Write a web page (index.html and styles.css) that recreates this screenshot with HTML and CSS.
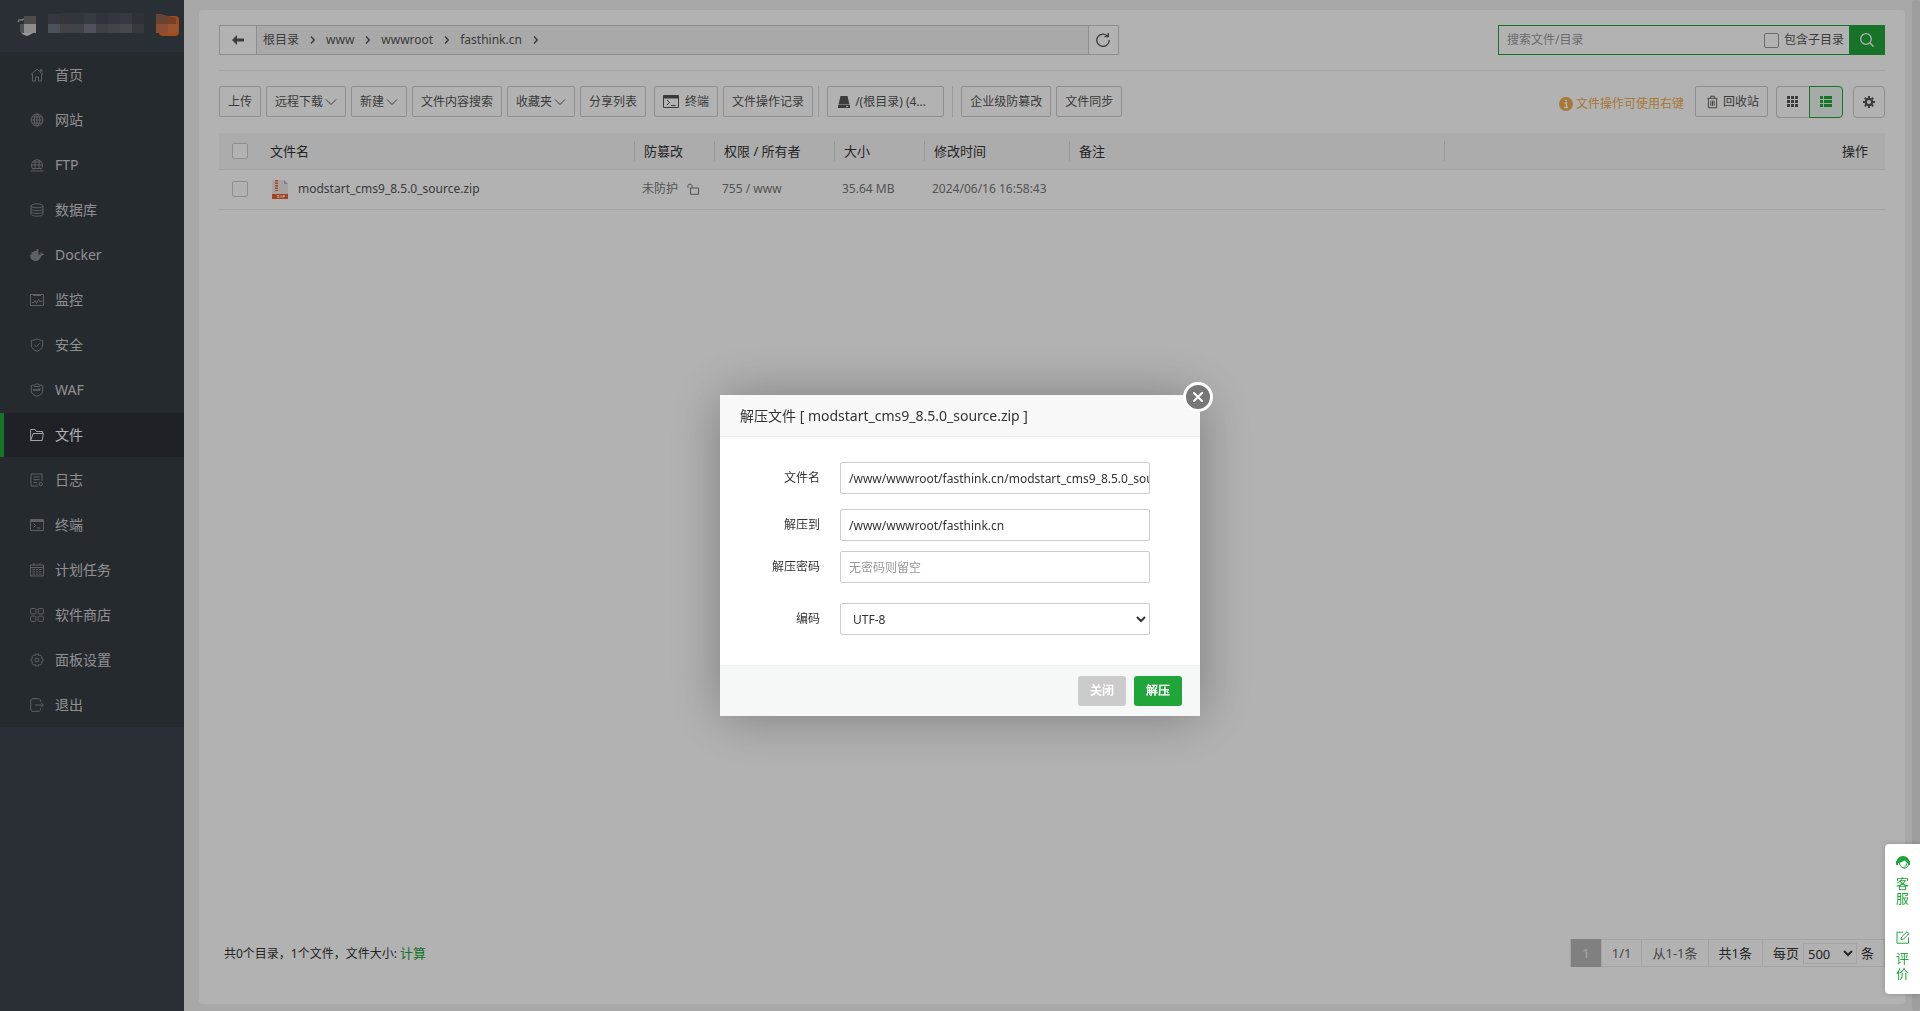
FILE: index.html
```html
<!DOCTYPE html>
<html lang="zh-CN">
<head>
<meta charset="utf-8">
<title>文件</title>
<link rel="stylesheet" href="styles.css">
</head>
<body>
<div class="app">
  <aside class="sidebar">
    <div class="brand">
      <svg class="brand-art" width="184" height="52" viewBox="0 0 184 52" aria-hidden="true">
        <path d="M18 22l1-2h3l2-1M21 24v6c0 2 1 3 2 4" fill="none" stroke="#a8abae" stroke-width="1.500"/>
        <path d="M24 16h12v8H24z" fill="#6a6d70"/><path d="M24 24h12v9H24z" fill="#c8cacc"/><path d="M20 24h4v9h-2c-1-1-2-3-2-5z" fill="#6f7275"/><path d="M22 33h11c-2 1-3 2-6 3-2-1-4-1-5-3z" fill="#d8dadb"/>
        <g>
          <path fill="#4b505b" d="M48 14h12v10H48z"/><path fill="#484d57" d="M60 13h12v11H60z"/><path fill="#474c56" d="M72 13h12v11H72z"/><path fill="#4e535e" d="M84 13h12v11H84z"/><path fill="#464a54" d="M96 13h12v11H96z"/><path fill="#4a4e57" d="M108 13h12v11h-12z"/><path fill="#4e525d" d="M120 13h12v11h-12z"/><path fill="#434851" d="M132 13h12v11h-12z"/>
          <path fill="#6a7480" d="M48 24h12v9H48z"/><path fill="#5e6166" d="M60 24h12v9H60z"/><path fill="#5c6067" d="M72 24h12v9H72z"/><path fill="#727686" d="M84 24h12v9H84z"/><path fill="#585c62" d="M96 24h12v9H96z"/><path fill="#5d6269" d="M108 24h12v9h-12z"/><path fill="#636970" d="M120 24h12v9h-12z"/><path fill="#4e5357" d="M132 24h12v9h-12z"/>
        </g>
        <rect x="159" y="16" width="20" height="20" rx="4" fill="#ea6a2a"/>
        <path d="M156 14h5l7 2v8h-12z" fill="#93604a"/><path d="M156 24h12v9h-12z" fill="#c5704a"/><path d="M168 16l8 2v6h-8z" fill="#a85c38"/><path d="M168 24h10v9h-10z" fill="#df7740"/>
      </svg>
    </div>
    <ul class="menu">
      <li><a href="#"><svg viewBox="0 0 14 14"><path d="M1 6.500L7 1l6 5.500M2.500 6v7h3V9h3v4h3V6M10.500 3.500V1.500h1.500v3"/></svg>首页</a></li>
      <li><a href="#"><svg viewBox="0 0 14 14"><circle cx="7" cy="7" r="6"/><ellipse cx="7" cy="7" rx="2.800" ry="6"/><path d="M7 1v12M1 7h12M2 4h10M2 10h10"/></svg>网站</a></li>
      <li><a href="#"><svg viewBox="0 0 14 14"><path d="M3.500 11.500a5.500 5.500 0 1 1 7 0M1.500 7h11M2.500 4h9M2.500 10.500h9M5 10.500V2M9 10.500V2M.5 13h13"/></svg>FTP</a></li>
      <li><a href="#"><svg viewBox="0 0 14 14"><ellipse cx="7" cy="2.800" rx="6" ry="2"/><path d="M1 3v8.200c0 1 2.500 2 6 2s6-1 6-2V3M1 5.700c0 1 2.500 2 6 2s6-1 6-2M1 8.500c0 1 2.500 2 6 2s6-1 6-2"/></svg>数据库</a></li>
      <li><a href="#"><svg viewBox="0 0 14 14"><path class="solid" d="M0 6.500h1.500V4H4V3h2.500V1h2v5.500h2c0-1-.2-1.500.5-2.500.7.500 1 1 1 1.700.8 0 1.500 0 2 .5-.5 1-1.300 1.300-2.500 1.300C10.500 11 8.500 13 5.500 13 2 13 0 10.500 0 6.500z"/></svg>Docker</a></li>
      <li><a href="#"><svg viewBox="0 0 14 14"><path d="M.5 1.500h13v11H.5zM3 2.500h8M2 9.500h2l1-2 1.500 3 2-4L10 9l1-1h1.500"/></svg>监控</a></li>
      <li><a href="#"><svg viewBox="0 0 14 14"><path d="M7 .7C5.500 1.800 3.500 2.300 1.300 2.500V7c0 3 2.500 5 5.700 6.300C10.200 12 12.700 10 12.700 7V2.500C10.500 2.300 8.500 1.800 7 .7zM4.200 6.800l2.100 2 3.500-3.500"/></svg>安全</a></li>
      <li><a href="#"><svg viewBox="0 0 14 14"><path d="M7 .7C5.500 1.800 3.500 2.300 1.300 2.500V8c0 3 2.500 4 5.700 5.300C10.200 12 12.700 11 12.700 8V2.500C10.500 2.300 8.500 1.800 7 .7zM4 3.500h6M3 6l.8 2L5 6l1 2 1-2 1 2V6h1.500v2M9.500 6H11"/></svg>WAF</a></li>
      <li class="active"><a href="#"><svg viewBox="0 0 14 14"><path d="M.6 12.500V1.500h4.500l1.400 2h6v2M.6 12.500h11.600L13.400 5.500H3.200L.6 12.500"/></svg>文件</a></li>
      <li><a href="#"><svg viewBox="0 0 14 14"><path d="M8 13H1V1h11v7M3.500 4h6M3.500 6.700h6M3.500 9.500h3.500"/><circle cx="10.800" cy="11" r="1.700"/></svg>日志</a></li>
      <li><a href="#"><svg viewBox="0 0 14 14"><path d="M.5 1.500h13v11H.5zM1 2.500h12M1 3.500h12M3.500 5.500l2 2-2 2M7 10h3.500"/></svg>终端</a></li>
      <li><a href="#"><svg viewBox="0 0 14 14"><path d="M.5 2h13v11H.5zM4 0v2M10 0v2M1 4.500h12M2.500 6.500h2.500M6 6.500h2M9 6.500h2.500M2.500 8.700h2.500M6 8.700h2M9 8.700h2.500M2.500 11h2.500M6 11h2M9 11h2.500"/></svg>计划任务</a></li>
      <li><a href="#"><svg viewBox="0 0 14 14"><rect x=".6" y=".6" width="5.300" height="5.300" rx="1"/><rect x="8.100" y=".6" width="5.300" height="5.300" rx="1"/><rect x=".6" y="8.100" width="5.300" height="5.300" rx="1"/><rect x="8.100" y="8.100" width="5.300" height="5.300" rx="1"/></svg>软件商店</a></li>
      <li><a href="#"><svg viewBox="0 0 14 14"><circle cx="7" cy="7" r="2"/><path d="M5.700 1h2.600l.5 1.500 1.700-.4 1.500 1.700-.6 1.500L13 6v2l-1.600.8.600 1.500-1.500 1.700-1.700-.5L8.300 13H5.700l-.5-1.500-1.700.5L2 10.300l.6-1.500L1 8V6l1.600-.7L2 3.800l1.500-1.700 1.700.4z"/></svg>面板设置</a></li>
      <li><a href="#"><svg viewBox="0 0 14 14"><path d="M10.500 3.500V2l-1.300-1.300H2L.7 2v10L2 13.300h7.200l1.300-1.300v-1.500M5 7h8.300M11 4.500L13.300 7 11 9.500"/></svg>退出</a></li>
    </ul>
  </aside>

  <main class="main">
    <section class="panel">
      <div class="path-row">
        <div class="path">
          <button class="path-btn back" type="button" aria-label="返回"><svg width="12" height="10" viewBox="0 0 12 10"><path d="M0 5l5-5v3.500h7v3H5V10z" fill="currentColor"/></svg></button>
          <nav class="crumbs">
            <a href="#">根目录</a><svg class="chev" viewBox="0 0 5 8"><path d="M1 .5L4.300 4 1 7.500"/></svg>
            <a href="#">www</a><svg class="chev" viewBox="0 0 5 8"><path d="M1 .5L4.300 4 1 7.500"/></svg>
            <a href="#">wwwroot</a><svg class="chev" viewBox="0 0 5 8"><path d="M1 .5L4.300 4 1 7.500"/></svg>
            <a href="#">fasthink.cn</a><svg class="chev" viewBox="0 0 5 8"><path d="M1 .5L4.300 4 1 7.500"/></svg>
          </nav>
          <button class="path-btn reload" type="button" aria-label="刷新"><svg class="line" width="14" height="14" viewBox="0 0 14 14"><path d="M11.800 3.300A6.200 6.200 0 1 0 13.200 7M12.300 0v3.700H8.600" stroke-width="1.300"/></svg></button>
        </div>
        <form class="search">
          <input class="search-text" type="text" placeholder="搜索文件/目录" aria-label="搜索文件/目录">
          <label class="search-sub"><input class="check" type="checkbox">包含子目录</label>
          <button class="search-btn" type="button" aria-label="搜索"><svg class="line" width="14" height="14" viewBox="0 0 14 14"><circle cx="6" cy="6" r="5.300" stroke-width="1.300"/><path d="M10 10l3.600 3.600" stroke-width="1.500"/></svg></button>
        </form>
      </div>

      <div class="toolbar">
        <button class="btn" type="button">上传</button>
        <button class="btn" type="button">远程下载<svg class="caret" viewBox="0 0 12 12"><path d="M1 3.500L6 8.500l5-5"/></svg></button>
        <button class="btn" type="button">新建<svg class="caret" viewBox="0 0 12 12"><path d="M1 3.500L6 8.500l5-5"/></svg></button>
        <button class="btn" type="button">文件内容搜索</button>
        <button class="btn" type="button">收藏夹<svg class="caret" viewBox="0 0 12 12"><path d="M1 3.500L6 8.500l5-5"/></svg></button>
        <button class="btn" type="button">分享列表</button>
        <button class="btn group-start" type="button"><svg class="line term" width="16" height="13" viewBox="0 0 16 13"><path d="M.5.500h15v12H.5z"/><path d="M4 5l2.500 2.500L4 10M8 10.500h4.500"/><path d="M1 1h14v2H1z" fill="currentColor"/></svg>终端</button>
        <button class="btn" type="button">文件操作记录</button>
        <span class="sep"></span>
        <button class="btn disk" type="button"><svg width="12" height="12" viewBox="0 0 12 12"><path d="M2.500 0h7L11.500 8.500H.5zM0 9h12v3H0z" fill="currentColor"/><path d="M8 10.500h2" stroke="#fff"/></svg>/(根目录) (4...</button>
        <span class="sep wide"></span>
        <button class="btn" type="button">企业级防篡改</button>
        <button class="btn" type="button">文件同步</button>
        <div class="tools">
          <span class="hint"><svg width="14" height="14" viewBox="0 0 14 14"><circle cx="7" cy="7" r="7" fill="currentColor"/><path d="M5.500 6h2v4M5 10.500h4M6 3.500h2" stroke="#fff" stroke-width="1.500" fill="none"/></svg>文件操作可使用右键</span>
          <button class="btn recycle" type="button"><svg class="line" width="12" height="14" viewBox="0 0 12 14"><path d="M.5 3h11M4 3V.7h4V3M1.500 3.500v9.800h9V3.500M4.200 5.500v5.700M6 5.500v5.700M7.800 5.500v5.700"/></svg>回收站</button>
          <div class="views">
            <button class="view" type="button" aria-label="图标"><svg width="12" height="12" viewBox="0 0 12 12"><path fill="currentColor" d="M0 0h3v3H0zM4 0h3v3H4zM8 0h3v3H8zM0 4h3v3H0zM4 4h3v3H4zM8 4h3v3H8zM0 8h3v3H0zM4 8h3v3H4zM8 8h3v3H8z"/></svg></button>
            <button class="view on" type="button" aria-label="列表"><svg width="12" height="12" viewBox="0 0 12 12"><path fill="currentColor" d="M0 0h3v3H0zM4 0h8v3H4zM0 4h3v3H0zM4 4h8v3H4zM0 8h3v3H0zM4 8h8v3H4z"/></svg></button>
          </div>
          <button class="gear" type="button" aria-label="设置"><svg width="12" height="12" viewBox="0 0 12 12"><circle cx="6" cy="6" r="3.200" fill="none" stroke="currentColor" stroke-width="2.200"/><path d="M6 0v2M6 10v2M0 6h2M10 6h2M1.800 1.800l1.400 1.400M8.800 8.800l1.400 1.400M1.800 10.200l1.400-1.400M8.800 3.200l1.400-1.400" stroke="currentColor" stroke-width="2"/></svg></button>
        </div>
      </div>

      <table class="files">
        <colgroup><col class="c-check"><col><col class="c-guard"><col class="c-perm"><col class="c-size"><col class="c-time"><col class="c-note"><col class="c-ops"></colgroup>
        <thead>
          <tr><th class="first"><input class="check" type="checkbox" aria-label="全选"></th><th class="plain">文件名</th><th>防篡改</th><th>权限 / 所有者</th><th>大小</th><th>修改时间</th><th>备注</th><th class="ops">操作</th></tr>
        </thead>
        <tbody>
          <tr>
            <td class="first"><input class="check" type="checkbox" aria-label="选择 modstart_cms9_8.5.0_source.zip"></td>
            <td><a class="file" href="#"><svg width="16" height="19" viewBox="0 0 16 19"><path d="M0 0h12l4 4v10H0z" fill="#f0e9e6"/><path d="M12 0v4h4z" fill="#bbb"/><path d="M4.500 0v11" stroke="#e8663c" stroke-width="3" stroke-dasharray="1.500 1"/><path d="M0 14h16v5H0z" fill="#ea6030"/><path d="M5 15.500h2l-1.500 2h2M9 15v3M11 18v-2.500h1.500v1H11" stroke="#fff" fill="none" stroke-width=".8"/></svg>modstart_cms9_8.5.0_source.zip</a></td>
            <td><span class="guard">未防护<svg class="line" width="12" height="12" viewBox="0 0 12 12"><path d="M3.500 5h8v6.300h-8zM5 5V2.500C5 .8 1 .8 1 2.500V5"/></svg></span></td>
            <td>755 / www</td><td>35.64 MB</td><td>2024/06/16 16:58:43</td><td></td><td></td>
          </tr>
        </tbody>
      </table>

      <footer class="foot">
        <p class="summary">共0个目录，1个文件，文件大小: <a href="#">计算</a></p>
        <div class="pager">
          <span class="page current">1</span><span class="page soft">1/1</span><span class="page soft">从1-1条</span><span class="page">共1条</span>
          <label class="page per">每页<select><option>500</option></select>条</label>
        </div>
      </footer>
    </section>
  </main>
  <div class="scroll"></div>
</div>

<div class="overlay">
  <div class="dialog" role="dialog" aria-labelledby="dlg-title">
    <h2 class="dialog-title" id="dlg-title">解压文件 [ modstart_cms9_8.5.0_source.zip ]</h2>
    <button class="dialog-x" type="button" aria-label="关闭"><svg width="10" height="10" viewBox="0 0 10 10"><path d="M0 0l10 10M10 0L0 10" stroke="#fff" stroke-width="2"/></svg></button>
    <form class="form">
      <div class="row"><label for="f-name">文件名</label><input id="f-name" type="text" value="/www/wwwroot/fasthink.cn/modstart_cms9_8.5.0_source.zip"></div>
      <div class="row"><label for="f-dest">解压到</label><input id="f-dest" type="text" value="/www/wwwroot/fasthink.cn"></div>
      <div class="row tight"><label for="f-pass">解压密码</label><input id="f-pass" type="text" placeholder="无密码则留空"></div>
      <div class="row loose"><label for="f-code">编码</label><select id="f-code"><option>UTF-8</option></select></div>
    </form>
    <div class="dialog-foot"><button class="act" type="button">关闭</button><button class="act go" type="button">解压</button></div>
  </div>
</div>

<div class="service">
  <a href="#"><svg width="14" height="13" viewBox="0 0 14 13"><path d="M1 7C0 3 3 0 7 0s7 3 6 7H11L9 4.500 3.500 7z" fill="currentColor"/><path d="M0 5h2v4H0zM12 5h2v4h-2z" fill="currentColor"/><path d="M3.500 7c.3 3 2 4.500 3.500 4.500S10.700 10 11 7M12.500 8c0 2.500-2 4-5 4.300" fill="none" stroke="currentColor"/></svg><span>客服</span></a>
  <a href="#"><svg class="line" width="14" height="13" viewBox="0 0 14 13"><path d="M7 1.200H1v11h11.500V6.500M5 8.500l.5-2.500L11 .700l2 2L7.500 8z"/></svg><span>评价</span></a>
</div>
</body>
</html>
```
FILE: styles.css
```css
* { box-sizing: border-box; }
body, ul, h2, p { margin: 0; padding: 0; }
body, button, input, select {
  font-family: "Noto Sans", "Noto Sans CJK SC", sans-serif;
  font-size: 12px;
  line-height: 16px;
  color: #555;
}
a { color: inherit; text-decoration: none; }
button { padding: 0; }
.line { fill: none; stroke: currentColor; stroke-width: 1; }

.app { display: flex; min-height: 100vh; background: #f1f1f1; }

/* Sidebar */
.sidebar { width: 184px; flex: none; background: #3c444d; }
.brand { height: 52px; }
.brand-art { display: block; }
.menu { list-style: none; background: #353d44; }
.menu li { padding-top: 1px; }
.menu a {
  display: flex;
  align-items: center;
  gap: 11px;
  height: 44px;
  padding-left: 26px;
  border-left: 4px solid transparent;
  font-size: 14px;
  color: #cfcfcf;
}
.menu svg { width: 14px; height: 14px; fill: none; stroke: #868b8f; stroke-width: 1; }
.menu .solid { fill: #868b8f; stroke: none; }
.menu .active a { background: #2c3138; border-left-color: #20a53a; color: #fff; }
.menu .active svg { stroke: #e8e8e8; }

/* Main panel */
.main { flex: 1; display: flex; padding: 10px 7px 7px 15px; }
.scroll { width: 8px; flex: none; border-radius: 4px; background: #e2e2e2; }
.panel { flex: 1; display: flex; flex-direction: column; padding: 15px 20px 37px; border-radius: 4px; background: #fff; }

.path-row { display: flex; justify-content: space-between; padding-bottom: 15px; border-bottom: 1px solid #eee; }
.path { display: flex; width: 54%; height: 30px; border: 1px solid #ccc; background: #f3f3f3; }
.path-btn { display: flex; align-items: center; justify-content: center; border: 0 solid #ccc; background: #fff; }
.back { width: 37px; border-right-width: 1px; }
.reload { width: 30px; border-left-width: 1px; }
.crumbs { flex: 1; display: flex; align-items: center; gap: 11px; padding-left: 6px; }
.chev { width: 5px; height: 8px; fill: none; stroke: #555; stroke-width: 1.500; }

.search { display: flex; width: 387px; height: 30px; border: 1px solid #20a53a; }
.search-text { flex: 1; min-width: 0; padding: 0 8px; border: 0; background: none; }
.search-sub { display: flex; align-items: center; gap: 5px; padding-right: 6px; }
.search-btn { width: 36px; margin: -1px; border: 0; background: #20a53a; color: #fff; display: flex; align-items: center; justify-content: center; }
::placeholder { color: #999; }

.check { appearance: none; width: 15px; height: 15px; margin: 0; border: 1px solid #999; border-radius: 2px; background: #fff; }

.toolbar { display: flex; align-items: flex-start; gap: 5px; padding: 15px 0 12px; }
.btn {
  display: flex;
  align-items: center;
  height: 31px;
  padding: 0 8px;
  border: 1px solid #ccc;
  border-radius: 2px;
  background: #fff;
  white-space: nowrap;
}
.caret { width: 12px; height: 12px; margin-left: 2px; fill: none; stroke: #555; }
.group-start { margin-left: 3px; }
.term { margin-right: 6px; }
.sep { width: 1px; height: 31px; margin-right: 3px; background: #ddd; }
.sep.wide { margin-left: 3px; }
.disk { width: 117px; gap: 5px; padding-left: 10px; }
.tools { display: flex; align-items: flex-start; margin-left: auto; }
.hint { display: flex; align-items: center; gap: 3px; height: 35px; margin-right: 11px; color: #f0ad4e; }
.recycle { gap: 5px; width: 73px; padding-left: 11px; margin-right: 8px; }
.views { display: flex; margin-right: 10px; }
.view, .gear { display: flex; align-items: center; justify-content: center; height: 32px; border: 1px solid #ccc; background: #fff; }
.view { width: 33px; border-right: 0; border-radius: 4px 0 0 4px; }
.view.on { width: 34px; border: 1px solid #20a53a; border-radius: 0 4px 4px 0; background: #edf7ef; color: #20a53a; }
.gear { width: 32px; border-radius: 4px; }

/* File table */
.files { width: 100%; table-layout: fixed; border-collapse: collapse; }
.c-check { width: 41px; }
.c-guard { width: 80px; }
.c-perm { width: 120px; }
.c-size { width: 90px; }
.c-time { width: 145px; }
.c-note { width: 375px; }
.c-ops { width: 441px; }
.files th {
  height: 36px;
  padding: 0 10px;
  border-bottom: 1px solid #eaeaea;
  background: linear-gradient(#ddd, #ddd) no-repeat left center / 1px 20px #f6f6f6;
  font-size: 13px;
  font-weight: 400;
  text-align: left;
  color: #333;
}
.files .first, .files .plain { background-image: none; }
.files .first { padding: 0 0 0 13px; }
.files .check { display: block; width: 16px; height: 16px; border-color: #ccc; }
.files .ops { padding-right: 17px; text-align: right; }
.files td { height: 40px; padding: 0 8px; border-bottom: 1px solid #eaeaea; color: #777; }
.file { display: flex; align-items: center; gap: 10px; padding-left: 4px; color: #555; }
.guard { display: flex; align-items: center; gap: 9px; }

/* Footer */
.foot { display: flex; align-items: center; justify-content: space-between; margin-top: auto; padding-left: 5px; }
.summary { color: #333; }
.summary a { font-size: 13px; color: #20a53a; }
.pager { display: flex; height: 28px; border: 1px solid #eaeaea; font-size: 13px; color: #333; }
.page { display: flex; align-items: center; padding: 0 10px; border-left: 1px solid #eaeaea; }
.page.soft { color: #666; }
.page.current { margin: -1px 0; padding: 0 11px; border: 0; background: #b8b8b8; color: #eee; }
.per { gap: 4px; }
.per select { width: 54px; height: 21px; padding: 0; border: 1px solid #eaeaea; background: #fff; font-size: 13px; color: #333; }

/* Dialog */
.overlay {
  position: fixed;
  inset: 0;
  display: flex;
  align-items: center;
  justify-content: center;
  padding-top: 100px;
  background: rgba(0, 0, 0, .3);
}
.dialog { position: relative; width: 480px; background: #fff; box-shadow: 1px 1px 50px rgba(0, 0, 0, .3); }
.dialog-title { height: 42px; padding: 0 20px; border-bottom: 1px solid #eee; background: #f8f8f8; font-size: 14px; font-weight: 400; line-height: 41px; color: #333; }
.dialog-x {
  position: absolute;
  top: -13px;
  right: -13px;
  display: flex;
  align-items: center;
  justify-content: center;
  width: 30px;
  height: 30px;
  border: 3px solid #fff;
  border-radius: 50%;
  background: #777;
}
.form { padding: 25px 50px 30px 0; }
.row { display: flex; align-items: center; gap: 20px; margin-top: 15px; }
.row:first-child { margin-top: 0; }
.row.tight { margin-top: 10px; }
.row.loose { margin-top: 20px; }
.row label { flex: 1; text-align: right; color: #333; }
.row input, .row select { width: 310px; height: 32px; padding: 0 0 0 8px; border: 1px solid #ccc; border-radius: 2px; background: #fff; color: #333; }
.dialog-foot { display: flex; justify-content: flex-end; gap: 8px; padding: 10px 18px; border-top: 1px solid #edf1f0; background: #f5f8f7; }
.act { width: 48px; height: 30px; border: 0; border-radius: 3px; background: #cbcbcb; font-weight: 700; color: #fff; }
.act.go { background: #20a53a; }

/* Floating service entry */
.service {
  position: fixed;
  right: 0;
  bottom: 17px;
  display: flex;
  flex-direction: column;
  gap: 25px;
  width: 35px;
  height: 150px;
  padding-top: 12px;
  border-radius: 4px 0 0 4px;
  background: #fff;
  box-shadow: 0 0 5px rgba(0, 0, 0, .2);
  color: #20a53a;
}
.service a { display: flex; flex-direction: column; align-items: center; gap: 7px; }
.service span { width: 13px; font-size: 13px; line-height: 15px; }
```
